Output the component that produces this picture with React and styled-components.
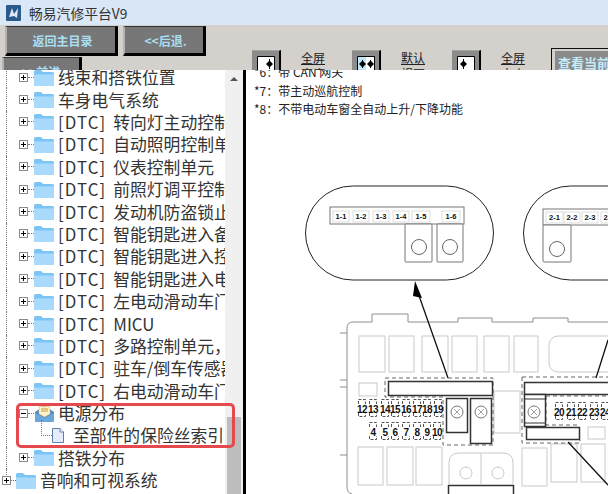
import styled, { createGlobalStyle } from "styled-components";

const GlobalStyle = createGlobalStyle`
  html, body { margin: 0; padding: 0; background: #fff; }
  body { width: 608px; height: 494px; overflow: hidden; font-family: "Noto Sans CJK SC", "Liberation Sans", sans-serif; }
`;

const Window = styled.div`
  width: 608px;
  height: 494px;
  display: flex;
  flex-direction: column;
  overflow: hidden;
`;

const TitleBar = styled.div`
  height: 25px;
  flex: none;
  display: flex;
  align-items: center;
  gap: 8px;
  padding-left: 6px;
  background: #d9e7f7;
  color: #333;
  font-size: 13.8px;
`;

const Toolbar = styled.div`
  height: 45px;
  flex: none;
  display: flex;
  overflow: hidden;
  background: #d4d1cd;
`;

const NavColumn = styled.div`
  width: 251px;
  flex: none;
  display: flex;
  flex-direction: column;
  gap: 1px;
  padding-top: 1px;
`;

const NavRow = styled.div`
  display: flex;
  gap: 5px;
  padding-left: ${p => p.$indent}px;
`;

const NavButton = styled.div`
  width: ${p => p.$w}px;
  height: 30px;
  box-sizing: border-box;
  flex: none;
  display: flex;
  align-items: center;
  justify-content: center;
  padding-left: 3px;
  background: #777;
  border-style: solid;
  border-width: 1px 3px 3px 2px;
  border-color: #333 #000 #000 #b4b4b4;
  color: #a9def2;
  font-size: 12px;
  font-weight: 700;
`;

const Tools = styled.div`
  display: flex;
  padding-top: 25px;
`;

const ToolGroup = styled.div`
  width: 100px;
  flex: none;
  display: flex;
  gap: 20px;
`;

const ToolIcon = styled.div`
  width: 29px;
  height: 30px;
  margin-left: 1px;
  box-sizing: border-box;
  flex: none;
  padding: 5px 4px 0 5px;
  background: #8b8b8b;
  border-top: 1px solid #a3a3a3;
  border-right: 2px solid #000;

  svg { display: block; }
`;

const ToolLabel = styled.div`
  width: 24px;
  flex: none;
  font-size: 12px;
  line-height: 16px;
  color: #222;
  text-decoration: underline;
`;

const ViewButton = styled.div`
  width: 70px;
  height: 30px;
  margin-top: -2px;
  box-sizing: border-box;
  flex: none;
  padding: 2px 0 0 3px;
  border: 1px solid #111;
  overflow: hidden;
`;

const ViewButtonFace = styled.div`
  height: 30px;
  padding: 3px 0 0 3px;
  background: #8a8a8a;
  color: #c4ecf8;
  font-size: 13px;
  font-weight: 700;
  line-height: 18px;
  white-space: nowrap;
`;

const Body = styled.div`
  position: relative;
  flex: 1;
  min-height: 0;
  display: flex;
`;

const TreePane = styled.div`
  width: 225px;
  flex: none;
  overflow: hidden;
  background: #fff;
`;

const TreeList = styled.div`
  margin-top: -4px;
`;

const TreeRow = styled.div`
  position: relative;
  height: 22.4px;
  display: flex;
  align-items: center;
  padding-left: ${p => p.$indent}px;
  color: #333;
  font-size: 16.8px;
  white-space: nowrap;

  &::before {
    content: "";
    position: absolute;
    left: 6px;
    top: 0;
    bottom: ${p => (p.$last ? "14px" : "0")};
    border-left: 1px dotted #777;
  }

  &::after {
    content: ${p => (p.$nested ? '""' : "none")};
    position: absolute;
    left: 41px;
    top: -4px;
    bottom: 11px;
    border-left: 1px dotted #777;
  }
`;

const Expander = styled.span`
  position: relative;
  width: 9px;
  height: 9px;
  box-sizing: border-box;
  flex: none;
  border: 1px solid #8a8a8a;
  background: #fff;

  &::before {
    content: "";
    position: absolute;
    left: 1px;
    right: 1px;
    top: 3px;
    height: 1px;
    background: #000;
  }

  &::after {
    content: ${p => (p.$open ? "none" : '""')};
    position: absolute;
    top: 1px;
    bottom: 1px;
    left: 3px;
    width: 1px;
    background: #000;
  }
`;

const Connector = styled.span`
  width: ${p => p.$w}px;
  flex: none;
  border-top: 1px dotted #777;
`;

const NodeIcon = styled.svg`
  flex: none;
  display: block;
  margin-right: ${p => p.$gap}px;
`;

const Dtc = styled.span`
  letter-spacing: 1.1px;
  margin-right: 7px;
`;

const Highlight = styled.div`
  position: absolute;
  left: 16px;
  top: 333px;
  width: 219px;
  height: 45px;
  box-sizing: border-box;
  border: 3px solid #e5484d;
  border-radius: 5px;
`;

const Scrollbar = styled.div`
  width: 18px;
  flex: none;
  display: flex;
  flex-direction: column;
  background: #f0f0f0;
`;

const ScrollArrow = styled.div`
  height: 17px;
  display: flex;
  align-items: center;
  justify-content: center;
  flex: none;

  &::after {
    content: "";
    border-left: 4px solid transparent;
    border-right: 4px solid transparent;
    border-bottom: 4px solid #555;
  }
`;

const ScrollTrack = styled.div`
  flex: 1;
  display: flex;
  flex-direction: column;
  justify-content: flex-end;
  align-items: center;
`;

const ScrollThumb = styled.div`
  width: 14px;
  height: 77px;
  background: #bdbdbd;
`;

const DocPane = styled.div`
  flex: 1;
  min-width: 0;
  overflow: hidden;
  background: #fff;
  border-left: 3px solid #000;
`;

const Notes = styled.div`
  margin-top: -7px;
  padding-left: 8px;
  height: 97px;
  font-size: 12px;
  line-height: 18.5px;
  color: #222;
`;

const Diagram = styled.svg`
  display: block;
`;

const DiagramLabel = styled.text`
  font-family: "Liberation Sans", sans-serif;
  font-size: ${p => p.$size}px;
  font-weight: 700;
  letter-spacing: ${p => p.$track}px;
  fill: #111;
  text-anchor: middle;
`;

function FolderIcon() {
  return (
    <NodeIcon $gap={4} width="20" height="17" viewBox="0 0 20 17">
      <path d="M0 2.5 Q0 1 1.5 1 H7 L9 3 H18.5 Q20 3 20 4.5 V15.5 Q20 17 18.5 17 H1.5 Q0 17 0 15.5Z" fill="#7cc4f5" />
      <path d="M0 5.5 H20 V15.5 Q20 17 18.5 17 H1.5 Q0 17 0 15.5Z" fill="#a9dafb" />
    </NodeIcon>
  );
}

function OpenFolderIcon() {
  return (
    <NodeIcon $gap={3} width="21" height="17" viewBox="0 0 21 17">
      <path d="M1 7 L10.5 0.5 L20 7 V15.5 Q20 17 18.5 17 H2.5 Q1 17 1 15.5Z" fill="#4d8cc4" />
      <path d="M5 1.5 H16 V9 L10.5 12 L5 9Z" fill="#fdf2c9" stroke="#d8b65c" strokeWidth=".5" />
      <path d="M7 4 H14 M7 6 H14" stroke="#c99a3c" strokeWidth="1" />
      <path d="M1 8 L10.5 13 L20 8 V15.5 Q20 17 18.5 17 H2.5 Q1 17 1 15.5Z" fill="#6aa7da" />
    </NodeIcon>
  );
}

function DocIcon() {
  return (
    <NodeIcon $gap={9} width="12" height="15" viewBox="0 0 12 15">
      <path d="M.5.5 H8 L11.5 4 V14.5 H.5Z" fill="#e4edf9" stroke="#5d7fae" />
      <path d="M8 .5 V4 H11.5" fill="#fff" stroke="#5d7fae" />
    </NodeIcon>
  );
}

const treeItems = [
  { label: "线束和搭铁位置" },
  { label: "车身电气系统" },
  { dtc: true, label: "转向灯主动控制单元" },
  { dtc: true, label: "自动照明控制单元" },
  { dtc: true, label: "仪表控制单元" },
  { dtc: true, label: "前照灯调平控制单元" },
  { dtc: true, label: "发动机防盗锁止系统" },
  { dtc: true, label: "智能钥匙进入备用" },
  { dtc: true, label: "智能钥匙进入控制" },
  { dtc: true, label: "智能钥匙进入电源" },
  { dtc: true, label: "左电动滑动车门" },
  { dtc: true, label: "MICU" },
  { dtc: true, label: "多路控制单元，" },
  { dtc: true, label: "驻车/倒车传感器" },
  { dtc: true, label: "右电动滑动车门" },
  { label: "电源分布", open: true },
  { label: "至部件的保险丝索引", child: true },
  { label: "搭铁分布" },
  { label: "音响和可视系统", root: true },
];

function TreeItem({ item }) {
  if (item.child) {
    return (
      <TreeRow $indent={41} $nested>
        <Connector $w={11} />
        <DocIcon />
        {item.label}
      </TreeRow>
    );
  }
  return (
    <TreeRow $indent={item.root ? 2 : 19} $last={item.root}>
      <Expander $open={item.open} />
      <Connector $w={item.root ? 5 : 6} />
      {item.open ? <OpenFolderIcon /> : <FolderIcon />}
      {item.dtc && <Dtc>[DTC]</Dtc>}
      {item.label}
    </TreeRow>
  );
}

const diamond = (x, y) => `M${x} ${y} l3.5 -3.5 l3.5 3.5 l-3.5 3.5Z`;

const arrowIcons = [
  <>
    <path d="M.5 .5 H17.5 V24 H.5Z" fill="#fff" stroke="#000" />
    <path d={diamond(9, 8)} fill="#000" />
    <path d="M12.5 3 V13" stroke="#000" />
  </>,
  <>
    <path d="M.5 .5 H17.5 V24 H.5Z" fill="#fff" stroke="#000" />
    <path d="M1 1 H9 V24 H1Z" fill="#bfe9fb" />
    <path d={diamond(2, 8)} fill="#000" />
    <path d={diamond(10, 8)} fill="#000" />
    <path d="M5.5 4 V12 M13.5 4 V12" stroke="#000" />
  </>,
  <>
    <path d="M.5 .5 H17.5 V24 H.5Z" fill="#fff" stroke="#000" />
    <path d={diamond(3, 8)} fill="#000" />
    <path d="M6.5 3 V13" stroke="#000" />
  </>,
];

const tools = [
  { icon: 0, lines: ["全屏", "宽度"] },
  { icon: 1, lines: ["默认", "视图"] },
  { icon: 2, lines: ["全屏", "大小"] },
];

const grayBoxes = [
  [359, 336, 26, 36], [389, 336, 25, 36], [422, 336, 26, 36], [452, 336, 25, 36],
  [484, 336, 25, 36], [514, 336, 24, 36], [359, 383, 18, 13], [494, 391, 26, 42],
  [588, 427, 17, 12], [358, 447, 25, 38], [387, 447, 26, 38], [416, 447, 26, 38],
  [522, 448, 25, 38], [551, 444, 26, 38], [581, 444, 24, 38],
];

const blackBoxes = [
  [388, 381, 104, 14], [446, 398, 21, 34], [470, 398, 21, 45],
  [524, 382, 90, 12], [524, 394, 21, 32], [526, 427, 53, 12], [448, 485, 65, 12],
];

const fuseTop = ["12", "13", "14", "15", "16", "17", "18", "19"];
const fuseTopX = [362, 373, 385, 395, 406, 417, 427, 438];
const fuseBottom = ["4", "5", "6", "7", "8", "9", "10"];
const fuseBottomX = [373, 385, 395, 406, 417, 427, 437];
const fuseRight = ["20", "21", "22", "23", "24"];
const fuseRightX = [559, 571, 582, 594, 605];

const connectorOne = [
  ["1-1", 333, 16], ["1-2", 353, 16], ["1-3", 373, 16], ["1-4", 393, 16], ["1-5", 412, 18], ["1-6", 442, 18],
];
const connectorTwo = [["2-1", 546, 17], ["2-2", 564, 16], ["2-3", 582, 16], ["2-4", 601, 16]];

function FuseSlots({ labels, xs, y }) {
  return labels.map((label, i) => (
    <g key={label}>
      <path
        d={`M${xs[i] - 3.5} ${y - 5} V${y - 9.5} H${xs[i] + 3.5} V${y - 5} M${xs[i] - 3.5} ${y + 4} V${y + 7.5} H${xs[i] + 3.5} V${y + 4}`}
        fill="none"
        stroke="#555"
        strokeDasharray="3 1.5"
      />
      <DiagramLabel $size={10} $track={-0.5} x={xs[i]} y={y + 3.5}>{label}</DiagramLabel>
    </g>
  ));
}

function FuseDiagram() {
  return (
    <Diagram width="362" height="334" viewBox="246 160 362 334">
      <rect x="305.5" y="186" width="188" height="94" rx="47" fill="#fff" stroke="#222" strokeWidth="1" />
      <rect x="523.5" y="186" width="188" height="94" rx="47" fill="#fff" stroke="#222" strokeWidth="1" />

      <rect x="330" y="207" width="134" height="17" fill="#fff" stroke="#777" />
      <rect x="405" y="224" width="27" height="38" rx="1" fill="#fff" stroke="#777" />
      <rect x="437" y="224" width="26" height="38" rx="1" fill="#fff" stroke="#777" />
      <circle cx="419" cy="247" r="7.5" fill="#fff" stroke="#666" />
      <circle cx="450" cy="247" r="7.5" fill="#fff" stroke="#666" />
      {connectorOne.map(([label, x, w]) => (
        <g key={label}>
          <rect x={x} y="211" width={w} height="11" fill="#fff" stroke="#ddd" />
          <DiagramLabel $size={7.5} $track={0} x={x + w / 2} y="219">{label}</DiagramLabel>
        </g>
      ))}

      <rect x="543" y="209" width="80" height="16" fill="#fff" stroke="#777" />
      <rect x="543" y="225" width="28" height="37" rx="1" fill="#fff" stroke="#777" />
      <circle cx="557" cy="249" r="7.5" fill="#fff" stroke="#666" />
      {connectorTwo.map(([label, x, w]) => (
        <g key={label}>
          <rect x={x} y="212" width={w} height="11" fill="#fff" stroke="#ddd" />
          <DiagramLabel $size={7.5} $track={0} x={x + w / 2} y="220">{label}</DiagramLabel>
        </g>
      ))}

      <path
        d="M340 333 H347 V328 Q347 322 353 322 H372 V314 H408 V322 H458 V318 H492 V322 H533 V318 H568 V322 H608 M347 333 V380 M340 380 H347 V387 H340 M347 387 V455 H340 M347 455 V487 Q347 493 352 494"
        fill="none"
        stroke="#8e8e8e"
        strokeWidth="1"
      />
      <rect x="549" y="336" width="70" height="36" rx="9" fill="#fff" stroke="#c9c9c9" />
      {grayBoxes.map(([x, y, w, h]) => (
        <rect key={`${x}-${y}`} x={x} y={y} width={w} height={h} fill="#fff" stroke="#c9c9c9" />
      ))}

      <path d="M385 378 H493 V445 H443 V397 H385Z" fill="none" stroke="#666" strokeDasharray="4 3" />
      <path d="M522 377 H608 M522 377 V443 H580 V440 M546 396 V425 H580 M546 396 H608" fill="none" stroke="#666" strokeDasharray="4 3" />

      {blackBoxes.map(([x, y, w, h]) => (
        <rect key={`${x}-${y}`} x={x + 0.5} y={y + 0.5} width={w} height={h} fill="#fff" stroke="#333" strokeWidth="1.5" />
      ))}
      <path d="M524 399 H545 M524 423 H545" stroke="#333" />
      <circle cx="457" cy="412" r="6" fill="#fff" stroke="#777" />
      <circle cx="481" cy="412" r="6" fill="#fff" stroke="#777" />
      <circle cx="534" cy="412" r="6" fill="#fff" stroke="#777" />
      <path d="M454 409 L460 415 M460 409 L454 415 M478 409 L484 415 M484 409 L478 415 M531 409 L537 415 M537 409 L531 415" stroke="#777" strokeWidth=".7" />

      <FuseSlots labels={fuseTop} xs={fuseTopX} y={409} />
      <FuseSlots labels={fuseBottom} xs={fuseBottomX} y={432} />
      <FuseSlots labels={fuseRight} xs={fuseRightX} y={412} />

      <path d="M449 485 V463 Q449 453 459 453 H503 Q513 453 513 463 V485 M481 453 V485" fill="none" stroke="#c9c9c9" />
      <circle cx="466" cy="473" r="6" fill="#fff" stroke="#c9c9c9" />
      <circle cx="498" cy="473" r="6" fill="#fff" stroke="#c9c9c9" />

      <path d="M417 290 L448 378 M608 340 L596 378 M568 442 L608 485" fill="none" stroke="#111" strokeWidth="1.3" />
      <path d="M415 281 L422 298 L413 296Z" fill="#000" />
    </Diagram>
  );
}

export default function App() {
  return (
    <Window>
      <GlobalStyle />
      <TitleBar>
        <svg width="15" height="16" viewBox="0 0 15 16">
          <rect width="15" height="16" rx="1" fill="#2a5a8c" />
          <path d="M3 12 L6 3 L8 9 L12 3 L11 13 L8 11Z" fill="#dce9f3" />
        </svg>
        畅易汽修平台V9
      </TitleBar>
      <Toolbar>
        <NavColumn>
          <NavRow $indent={5}>
            <NavButton $w={113}>返回主目录</NavButton>
            <NavButton $w={83}>&lt;&lt;后退.</NavButton>
          </NavRow>
          <NavRow $indent={2}>
            <NavButton $w={80}>&gt;&gt;前进.</NavButton>
          </NavRow>
        </NavColumn>
        <Tools>
          {tools.map(tool => (
            <ToolGroup key={tool.lines[1]}>
              <ToolIcon>
                <svg width="18" height="25" viewBox="0 0 18 25">{arrowIcons[tool.icon]}</svg>
              </ToolIcon>
              <ToolLabel>
                {tool.lines[0]}
                <br />
                {tool.lines[1]}
              </ToolLabel>
            </ToolGroup>
          ))}
          <ViewButton>
            <ViewButtonFace>查看当前</ViewButtonFace>
          </ViewButton>
        </Tools>
      </Toolbar>
      <Body>
        <TreePane>
          <TreeList>
            {treeItems.map(item => (
              <TreeItem key={item.label} item={item} />
            ))}
          </TreeList>
        </TreePane>
        <Scrollbar>
          <ScrollArrow />
          <ScrollTrack>
            <ScrollThumb />
          </ScrollTrack>
        </Scrollbar>
        <DocPane>
          <Notes>
            *6：带 CAN 网关
            <br />
            *7：带主动巡航控制
            <br />
            *8：不带电动车窗全自动上升/下降功能
          </Notes>
          <FuseDiagram />
        </DocPane>
        <Highlight />
      </Body>
    </Window>
  );
}
